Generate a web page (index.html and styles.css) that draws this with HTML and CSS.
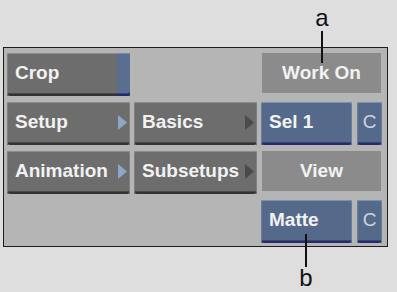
FILE: index.html
```html
<!DOCTYPE html>
<html lang="en">
<head>
    <meta charset="UTF-8">
    <title>Crop Menu</title>
    <link rel="stylesheet" href="styles.css">
</head>
<body>

<div class="stage">
    <div class="panel">
        <div class="btn gray">Crop<span class="lock"></span></div>
        <div></div>
        <div class="flat wide">Work On</div>

        <div class="btn gray">Setup
            <svg class="tri" width="9" height="15" viewBox="0 0 9 15"><polygon points="0,0 9,7.5 0,15" fill="#8ea6c8"/></svg>
        </div>
        <div class="btn gray">Basics
            <svg class="tri" width="9" height="15" viewBox="0 0 9 15"><polygon points="0,0 9,7.5 0,15" fill="#4a4a4a"/></svg>
        </div>
        <div class="btn blue">Sel 1</div>
        <div class="btn blue small">C</div>

        <div class="btn gray">Animation
            <svg class="tri" width="9" height="15" viewBox="0 0 9 15"><polygon points="0,0 9,7.5 0,15" fill="#8ea6c8"/></svg>
        </div>
        <div class="btn gray">Subsetups
            <svg class="tri" width="9" height="15" viewBox="0 0 9 15"><polygon points="0,0 9,7.5 0,15" fill="#4a4a4a"/></svg>
        </div>
        <div class="flat wide">View</div>

        <div></div>
        <div></div>
        <div class="btn blue">Matte</div>
        <div class="btn blue small">C</div>
    </div>

    <!-- callouts -->
    <div class="callout callout-a"><span>a</span><i></i></div>
    <div class="callout callout-b"><i></i><span>b</span></div>
</div>

</body>
</html>
```

FILE: styles.css
```css
body { margin: 0; background: #dedede; font-family: 'Liberation Sans', Arial, sans-serif; }
.stage { position: relative; width: 397px; height: 292px; padding-top: 47px; box-sizing: border-box; }

.panel { margin-left: 3px; width: 385px; height: 200px; box-sizing: border-box; border: 1px solid #1c1c1c; background: #b5b5b5;
    display: grid; grid-template-columns: 123px 123px 91px 26px; grid-template-rows: repeat(4, 43px);
    column-gap: 4px; row-gap: 6px; padding: 5px 0 0 3px; }

.btn { display: flex; align-items: center; padding: 0 0 3px 8px; border-radius: 2px; color: #f2f2f2; font-size: 19px; font-weight: bold; position: relative; }
.gray { background: #6d6d6d; box-shadow: inset 0 1px #8c8c8c, inset 1px 0 #7f7f7f, inset -1px 0 #7f7f7f, inset 0 -2px #333, inset 0 -3px #4a4a4a; }
.blue { background: #556a8b; box-shadow: inset 0 1px #7b91b2, inset 1px 0 #687ea0, inset -1px 0 #687ea0, inset 0 -2px #26296a, inset 0 -3px #3c4578; }
.blue.small { justify-content: center; padding-left: 0; color: #cfd5de; font-weight: normal; }
.panel > .blue.small { margin-left: 1px; }

.lock { margin-left: auto; align-self: stretch; width: 13px; margin-bottom: -3px; border-radius: 0 2px 2px 0;
    background: #5a6f90; box-shadow: inset 0 1px #7388a8, inset 0 -2px #26296a, inset 0 -3px #3c4578; }
.tri { margin-left: auto; margin-right: 3px; }

.flat { display: flex; align-items: center; justify-content: center; background: #8b8b8b; color: #f2f2f2; font-size: 19px; font-weight: bold; height: 40px; }
.wide { grid-column: span 2; margin: 0 1px; }

.callout { position: absolute; display: flex; flex-direction: column; align-items: center; color: #111; font-size: 24px; line-height: 1; }
.callout i { display: block; width: 2px; background: #111; }
.callout-a { left: 310px; top: 6px; width: 24px; }
.callout-a span { height: 25px; }
.callout-a i { height: 32px; }
.callout-b { left: 294px; top: 234px; width: 24px; }
.callout-b i { height: 33px; }
.callout-b span { margin-top: -1px; }
```
